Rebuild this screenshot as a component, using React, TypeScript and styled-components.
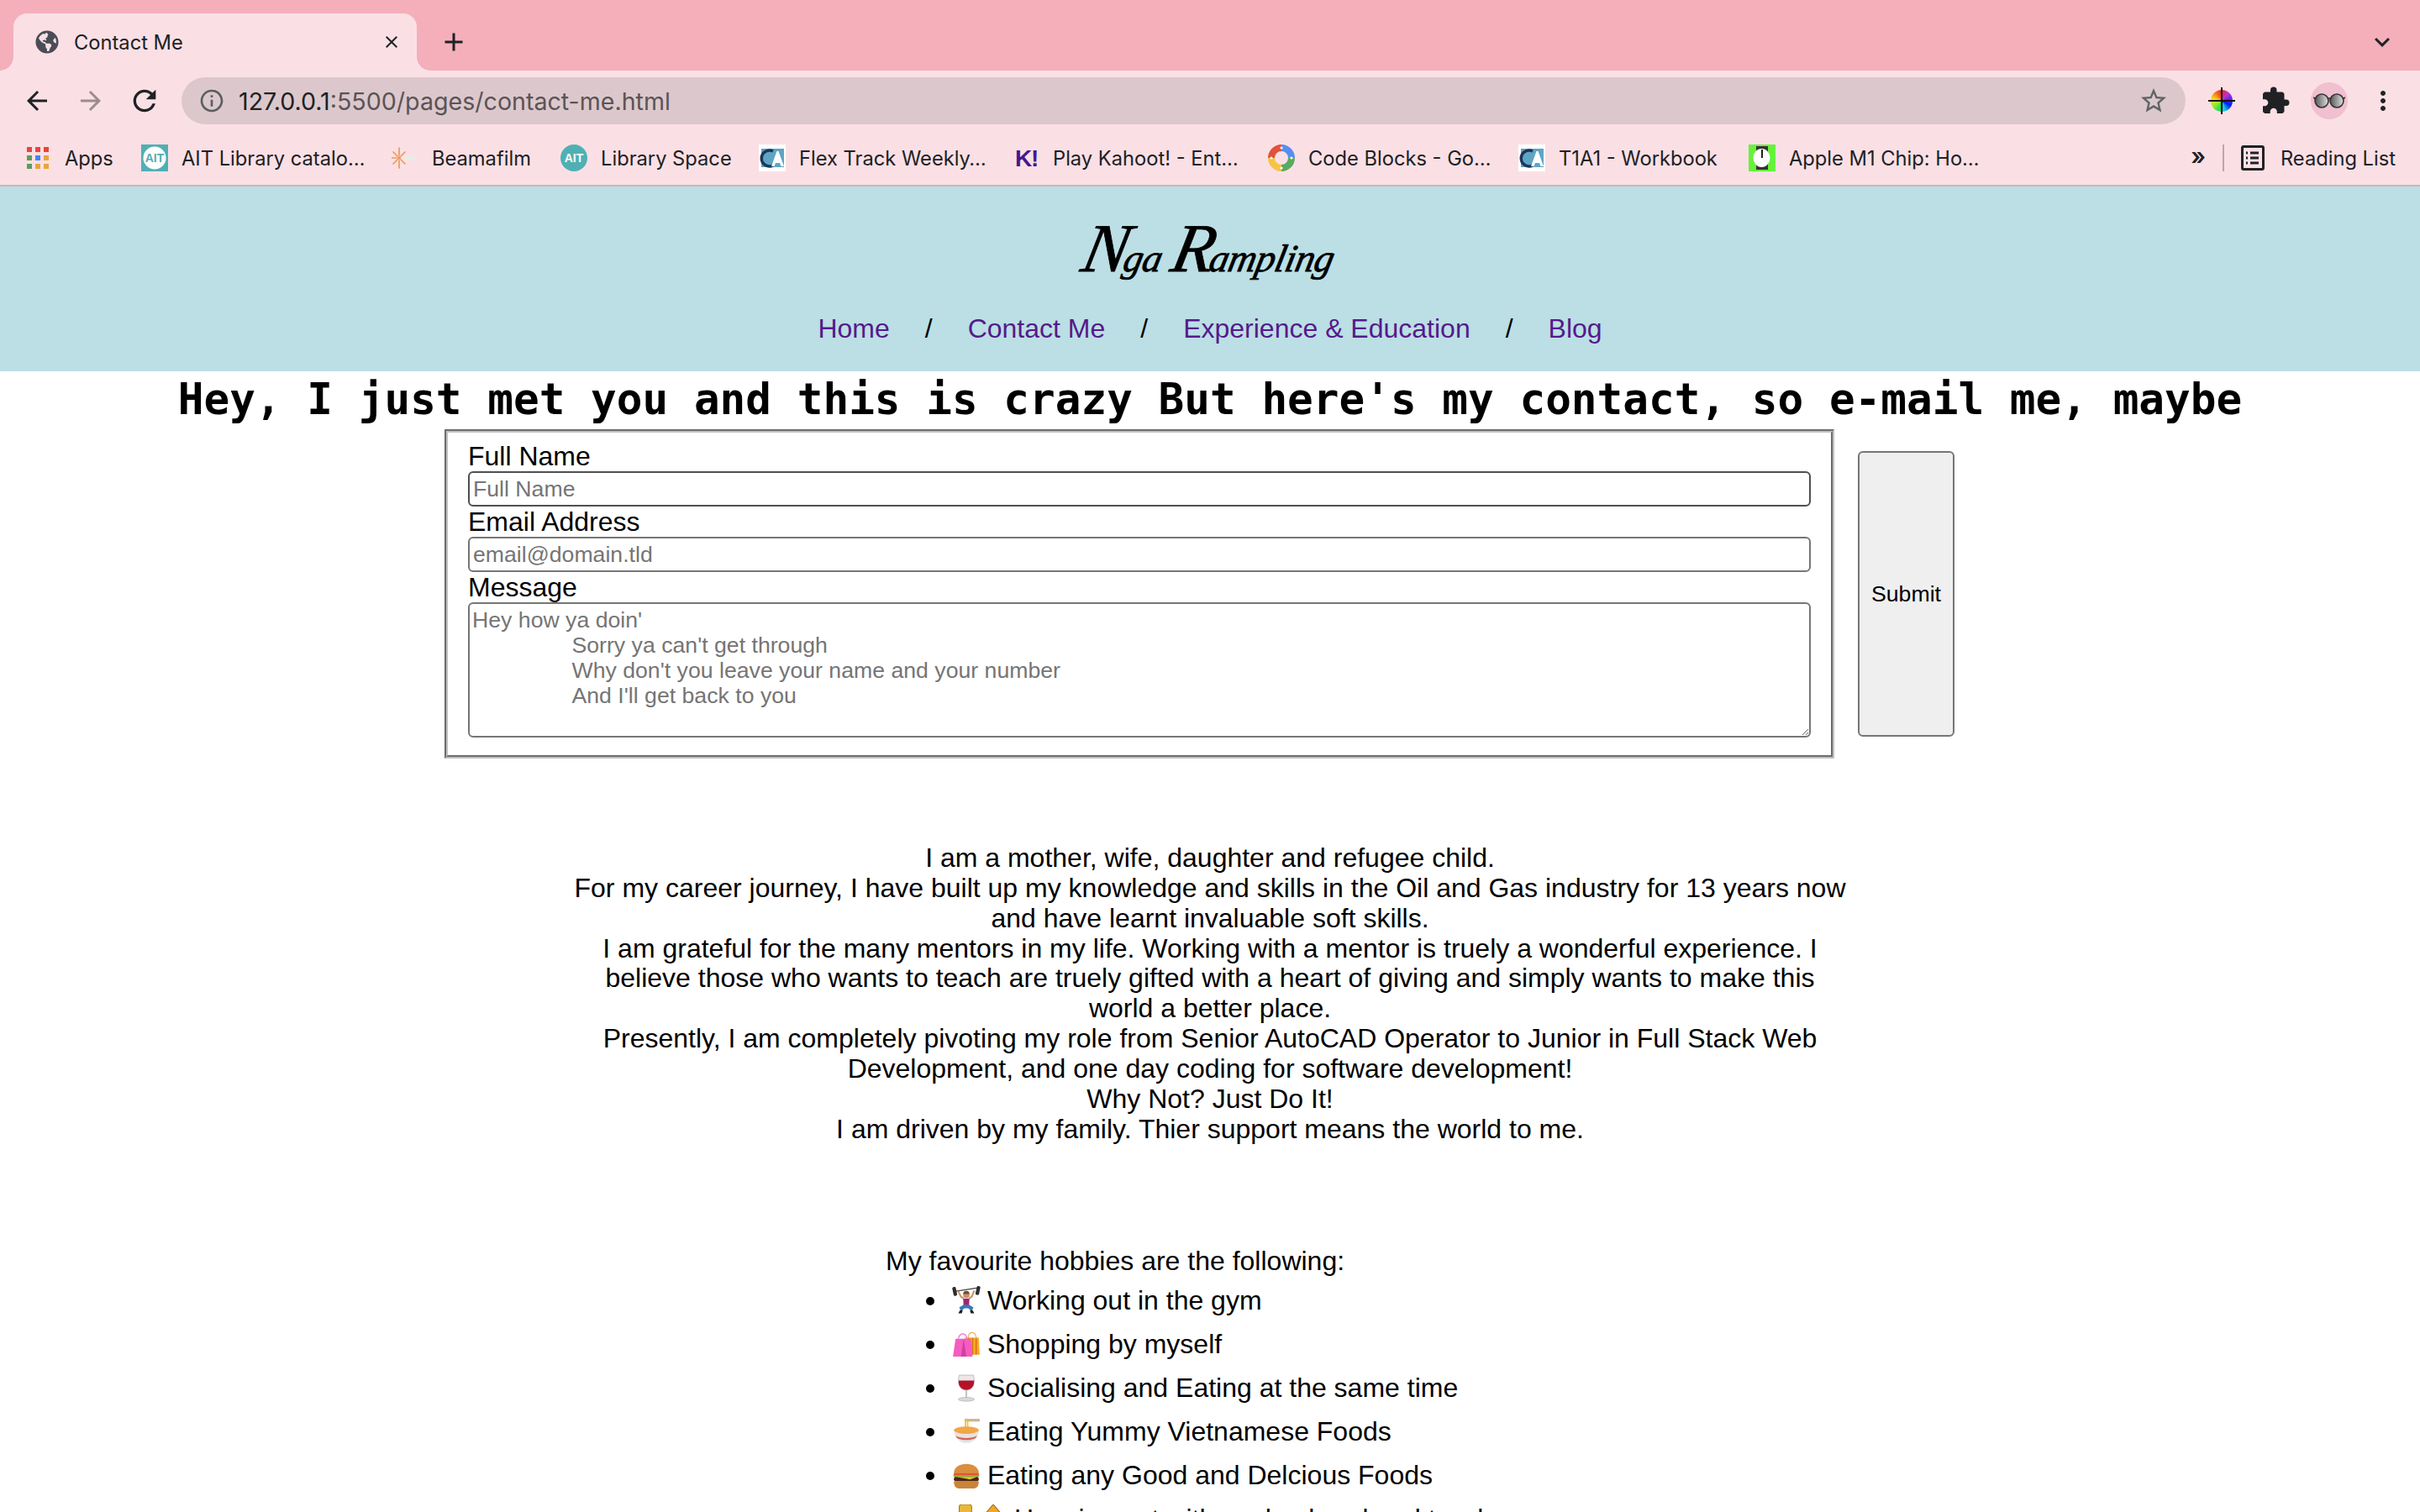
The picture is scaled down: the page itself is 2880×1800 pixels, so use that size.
import { ReactNode } from "react";
import styled, { createGlobalStyle } from "styled-components";
import {
  MdAdd,
  MdArrowBack,
  MdArrowForward,
  MdClose,
  MdExpandMore,
  MdExtension,
  MdInfoOutline,
  MdMoreVert,
  MdRefresh,
  MdStarBorder,
} from "react-icons/md";
import { FaGlobeAmericas } from "react-icons/fa";

const GlobalStyle = createGlobalStyle`
  html, body {
    margin: 0;
    height: 1800px;
    overflow: hidden;
    background: #fff;
    font-family: "Liberation Sans", Arial, sans-serif;
    color: #000;
  }
`;

/* browser chrome */

const TabStrip = styled.div`
  height: 84px;
  box-sizing: border-box;
  padding: 16px 0 0 16px;
  background: #f4afba;
  display: flex;
  align-items: flex-start;
  color: #202124;
`;

const Tab = styled.div`
  position: relative;
  width: 480px;
  height: 68px;
  box-sizing: border-box;
  padding: 0 18px 0 26px;
  display: flex;
  align-items: center;
  gap: 18px;
  background: #fae0e5;
  border-radius: 16px 16px 0 0;
  font: 400 23.7px Inter, "Noto Sans", sans-serif;

  &::before,
  &::after {
    content: "";
    position: absolute;
    bottom: 0;
    width: 16px;
    height: 16px;
  }
  &::before {
    left: -16px;
    background: radial-gradient(circle at 0 0, transparent 15.5px, #fae0e5 16px);
  }
  &::after {
    right: -16px;
    background: radial-gradient(circle at 100% 0, transparent 15.5px, #fae0e5 16px);
  }
`;

const TabTitle = styled.span`
  flex: 1;
  white-space: nowrap;
`;

const NewTab = styled.div`
  margin-left: 16px;
  width: 56px;
  height: 68px;
  display: flex;
  align-items: center;
  justify-content: center;
`;

const TabMenu = styled.div`
  margin-left: auto;
  width: 90px;
  height: 68px;
  display: flex;
  align-items: center;
  justify-content: center;
`;

const Toolbar = styled.div`
  background: #fae0e5;
  border-bottom: 2px solid #c6b7bd;
  color: #202124;
`;

const NavRow = styled.div`
  height: 72px;
  box-sizing: border-box;
  padding: 0 12px;
  display: flex;
  align-items: center;
`;

const ToolButton = styled.div<{ $color?: string }>`
  width: 64px;
  height: 56px;
  flex: none;
  display: flex;
  align-items: center;
  justify-content: center;
  color: ${(p) => p.$color || "#202124"};
`;

const Omnibox = styled.div`
  flex: 1;
  height: 56px;
  margin: 0 11px 0 12px;
  box-sizing: border-box;
  padding: 0 20px 0 20px;
  border-radius: 28px;
  background: #dcc8cc;
  display: flex;
  align-items: center;
  gap: 16px;
  color: #5b5356;
  font: 400 28.6px Inter, "Noto Sans", sans-serif;
`;

const Url = styled.span`
  flex: 1;
  white-space: nowrap;
`;

const Host = styled.span`
  color: #202124;
`;

const ColorWheel = styled.div`
  position: relative;
  width: 26px;
  height: 26px;
  border-radius: 50%;
  background: conic-gradient(#e8242c, #c030d0, #6020f0, #0020f0, #10c8e8, #30e050, #a0e830, #f8e020, #f08020, #e8242c);

  &::before,
  &::after {
    content: "";
    position: absolute;
    background: #111;
  }
  &::before {
    left: -3px;
    right: -3px;
    top: 12px;
    height: 2px;
  }
  &::after {
    top: -3px;
    bottom: -3px;
    left: 12px;
    width: 2px;
  }
`;

const Avatar = styled.div`
  width: 44px;
  height: 44px;
  border-radius: 50%;
  background: #f0bfd0;
  display: flex;
  align-items: center;
  justify-content: center;
`;

const BookmarkRow = styled.div`
  height: 64px;
  box-sizing: border-box;
  padding: 0 29px;
  display: flex;
  align-items: center;
  gap: 33px;
  font: 400 23.7px Inter, "Noto Sans", sans-serif;
`;

const Bookmark = styled.div`
  display: flex;
  align-items: center;
  gap: 16px;
  flex: none;
`;

const BookmarkIcon = styled.div`
  width: 32px;
  height: 32px;
  flex: none;
  display: flex;
  align-items: center;
  justify-content: center;
`;

const BookmarkLabel = styled.span<{ $w: number }>`
  display: block;
  width: ${(p) => p.$w}px;
  white-space: nowrap;
`;

const AppsGrid = styled.div`
  display: grid;
  grid-template-columns: repeat(3, 6px);
  grid-auto-rows: 6px;
  gap: 4px;
`;

const AppsDot = styled.i<{ $c: string }>`
  background: ${(p) => p.$c};
`;

const BookmarkEnd = styled.div`
  margin-left: auto;
  display: flex;
  align-items: center;
`;

const Overflow = styled.span`
  font-size: 28px;
  font-weight: 600;
  line-height: 32px;
  margin-top: -4px;
`;

const Separator = styled.div`
  width: 2px;
  height: 32px;
  margin: 0 20px 0 20px;
  background: #bba6ac;
`;

const ReadingLabel = styled.span`
  margin-left: 19px;
  white-space: nowrap;
`;

/* page */

const Header = styled.header`
  background: #bbdfe5;
  height: 220px;
  box-sizing: border-box;
  padding-top: 36px;
  display: flex;
  flex-direction: column;
  align-items: center;
`;

const Logo = styled.div`
  height: 75px;
  margin-bottom: 40px;
  font: italic 400 46px/75px "Liberation Serif", serif;
  letter-spacing: -0.5px;
  white-space: nowrap;
  -webkit-text-stroke: 0.8px #000;
  color: #000;
  transform: skewX(-12deg);
`;

const LogoCap = styled.span`
  font-size: 82px;
  letter-spacing: -5px;
  margin-right: 1px;
`;

const Nav = styled.nav`
  display: flex;
  gap: 42px;
  font-size: 32px;
  line-height: 36px;
`;

const NavLink = styled.a`
  color: #551a8b;
  text-decoration: none;
`;

const Heading = styled.h1`
  margin: 0 0 1px;
  text-align: center;
  font: 700 51px/68px "DejaVu Sans Mono", "Liberation Mono", monospace;
  white-space: nowrap;
`;

const FormRow = styled.form`
  display: flex;
  align-items: center;
  justify-content: center;
  padding-right: 25px;
  gap: 28px;
`;

const Fieldset = styled.fieldset`
  width: 1654px;
  box-sizing: border-box;
  margin: 0;
  padding: 10px 24px 21px;
  border: 4px groove #c0c0c0;
`;

const Label = styled.label`
  display: block;
  font-size: 32px;
  line-height: 36px;
`;

const Input = styled.input<{ $hovered?: boolean }>`
  display: block;
  width: 100%;
  height: 42px;
  box-sizing: border-box;
  padding: 2px 4px;
  border: 2px solid ${(p) => (p.$hovered ? "#4f4f4f" : "#767676")};
  border-radius: 6px;
  outline: none;
  font: 400 26.67px "Liberation Sans", Arial, sans-serif;

  &::placeholder {
    color: #757575;
    opacity: 1;
  }
`;

const TextArea = styled.textarea`
  display: block;
  width: 100%;
  height: 161px;
  box-sizing: border-box;
  padding: 4px 3px 2px;
  border: 2px solid #767676;
  border-radius: 6px;
  outline: none;
  font: 400 26.67px/30px "Liberation Sans", Arial, sans-serif;

  &::placeholder {
    color: #757575;
    opacity: 1;
  }
`;

const Submit = styled.button`
  width: 115px;
  height: 340px;
  flex: none;
  padding: 0;
  background: #efefef;
  border: 2px solid #767676;
  border-radius: 6px;
  color: #000;
  font: 400 26.67px "Liberation Sans", Arial, sans-serif;
`;

const About = styled.p`
  width: 1520px;
  margin: 101px auto 121px;
  text-align: center;
  font-size: 32px;
  line-height: 35.85px;
`;

const Hobbies = styled.div`
  width: 772px;
  margin: 0 auto;
  font-size: 32px;
  line-height: 36px;
`;

const HobbyList = styled.ul`
  margin: 3px 0 0;
  padding-left: 80px;
  list-style: none;
  line-height: 52px;
`;

const HobbyItem = styled.li`
  position: relative;

  &::before {
    content: "";
    position: absolute;
    left: -32px;
    top: 22px;
    width: 10px;
    height: 10px;
    border-radius: 50%;
    background: #000;
  }
`;

const Emoji = styled.svg`
  width: 34px;
  height: 34px;
  margin: 0 -1px;
  vertical-align: -6px;
`;

function Face({ children }: { children: ReactNode }) {
  return <Emoji viewBox="0 0 32 32">{children}</Emoji>;
}

const lifter = (
  <Face>
    <path d="M3 6 L29 2" stroke="#444" strokeWidth="1.4" />
    <rect x="1" y="1" width="4" height="10" rx="1.5" fill="#2c2c2e" transform="rotate(-12 3 6)" />
    <rect x="27" y="0" width="4" height="10" rx="1.5" fill="#2c2c2e" transform="rotate(12 29 5)" />
    <path d="M7 6 L10 12 L13 14 M25 5 L22 12 L19 14" stroke="#c8936a" strokeWidth="2" fill="none" />
    <circle cx="16" cy="10" r="3.6" fill="#c8936a" />
    <path d="M12.4 9 A3.6 3.6 0 0 1 19.6 9 Z" fill="#7a4a28" />
    <path d="M12.5 14 H19.5 L19 22 H13 Z" fill="#a3246e" />
    <path d="M13 21 H19 L24 24 L22 28 L18 25 H14 L10 28 L8 24 Z" fill="#3a78b8" />
    <path d="M9 27 H12 L11 30.5 H7 Z M20 27 H23 L25 30.5 H21 Z" fill="#222" />
  </Face>
);

const bags = (
  <Face>
    <path d="M14 9 H30 L31 28 H16 Z" fill="#f0b020" />
    <path d="M19 9 V28 M23 9 V28 M27 9 V28" stroke="#e46a28" strokeWidth="1.5" />
    <path d="M18 10 C18 1 27 1 27 10" stroke="#f0a848" strokeWidth="1.2" fill="none" />
    <path d="M4 10 H21 L23 30 H1 Z" fill="#f45cc0" />
    <path d="M13 10 L16 30 H10 Z" fill="#d040a0" />
    <path d="M7 12 C7 2 17 2 17 12" stroke="#f070c8" strokeWidth="1.2" fill="none" />
  </Face>
);

const wine = (
  <Face>
    <path d="M8 2 H24 C26 10 25 18 16 19 C7 18 6 10 8 2 Z" fill="#ece8e8" stroke="#b8b4b4" strokeWidth="0.8" />
    <path d="M7.5 8 H24.5 C25 13 23 18 16 18.5 C9 18 7 13 7.5 8 Z" fill="#b3132a" />
    <rect x="15" y="19" width="2" height="9" fill="#c8c4c4" />
    <ellipse cx="16" cy="29" rx="9" ry="2.2" fill="#dcd8d8" stroke="#aaa" strokeWidth="0.6" />
  </Face>
);

const noodles = (
  <Face>
    <path d="M14 2 H31 V5 H14 Z" fill="#c8b490" />
    <path d="M15 3 V15 M17.5 3 V15" stroke="#f0c030" strokeWidth="1.6" />
    <ellipse cx="16" cy="15" rx="14" ry="4.5" fill="#f2a648" />
    <path d="M2 15 C3 24 9 29 16 29 C23 29 29 24 30 15 C25 20 7 20 2 15 Z" fill="#e6e3e0" />
    <path d="M4 21 C10 24.5 22 24.5 28 21 L26.5 23.5 C21 26.5 11 26.5 5.5 23.5 Z" fill="#d8605c" />
  </Face>
);

const burger = (
  <Face>
    <path d="M2 14 C2 0 30 0 30 14 Z" fill="#d98f3e" />
    <path d="M2 14 H30 V16 H2 Z" fill="#e8503c" />
    <path d="M1 16 H31 L29 19 H3 Z" fill="#7cb83c" />
    <rect x="2" y="18" width="28" height="5" rx="2.5" fill="#4a2414" />
    <path d="M4 18 H28 L20 21 L16 20 Z" fill="#f8c820" />
    <path d="M2 23 H30 C30 29 27 31 24 31 H8 C5 31 2 29 2 23 Z" fill="#c98438" />
  </Face>
);

const mug = (
  <Face>
    <rect x="8" y="0" width="14" height="30" rx="3" fill="#e8b838" stroke="#a87818" strokeWidth="1" />
  </Face>
);

const sparkle = (
  <Face>
    <path d="M16 0 L28 14 L20 30 H8 L4 14 Z" fill="#f0a828" stroke="#a86a10" strokeWidth="1" />
  </Face>
);

const appsColors = [
  "#e8453c",
  "#e8453c",
  "#e8453c",
  "#5a9e5c",
  "#4285f4",
  "#e8a53c",
  "#5a9e5c",
  "#e8a53c",
  "#e8a53c",
];

const aitBadge = (round: boolean) => (
  <svg width="32" height="32" viewBox="0 0 32 32">
    {round ? <circle cx="16" cy="16" r="16" fill="#4fb0b3" /> : <rect width="32" height="32" fill="#4fb0b3" />}
    {!round && <circle cx="16" cy="16" r="13.5" fill="#fff" />}
    <text
      x="16"
      y="21"
      textAnchor="middle"
      fontFamily="Liberation Sans"
      fontWeight="700"
      fontSize="14"
      fill={round ? "#fff" : "#4fb0b3"}
    >
      AIT
    </text>
  </svg>
);

const caBadge = (
  <svg width="32" height="32" viewBox="0 0 32 32">
    <rect width="32" height="32" fill="#fff" />
    <rect x="3" y="5" width="27" height="22" fill="#5da5c4" />
    <path d="M17 8 A9.5 9.5 0 1 0 17 25" stroke="#1d3557" strokeWidth="3.5" fill="none" />
    <path d="M15 26 L21.5 8 H23.5 L30 26 H26.5 L25 22 H20 L18.5 26 Z" fill="#fff" />
  </svg>
);

const beamafilm = (
  <svg width="32" height="32" viewBox="0 0 32 32">
    <rect x="14" y="13" width="16" height="6" rx="3" fill="#e6ece8" opacity="0.7" />
    <g stroke="#eb9a5c" strokeWidth="1.7" strokeLinecap="round">
      <path d="M9 4 V13 M9 19 V28 M2 9 L7 14 M16 9 L11 14 M2 23 L7 18 M16 23 L11 18 M0 16 H6" />
    </g>
    <circle cx="9" cy="16" r="2" fill="#eb9a5c" />
  </svg>
);

const kahootBadge = (
  <svg width="32" height="32" viewBox="0 0 32 32">
    <text x="3" y="26" fontFamily="Liberation Sans" fontWeight="700" fontSize="28" fill="#46178f">
      K
    </text>
    <text x="22" y="26" fontFamily="Liberation Sans" fontWeight="700" fontSize="28" fill="#46178f">
      !
    </text>
  </svg>
);

const codeBlocks = (
  <svg width="32" height="32" viewBox="0 0 32 32" fill="none" strokeWidth="8">
    <path d="M16 4 A12 12 0 0 1 28 16" stroke="#5a8df0" />
    <path d="M28 16 A12 12 0 0 1 16 28" stroke="#5aaa60" />
    <path d="M16 28 A12 12 0 0 1 4 16" stroke="#f6c445" />
    <path d="M4 16 A12 12 0 0 1 16 4" stroke="#e0533d" />
    <g fill="#fff" stroke="none">
      <circle cx="16" cy="4" r="1.6" />
      <circle cx="28" cy="16" r="1.6" />
      <circle cx="16" cy="28" r="1.6" />
      <circle cx="4" cy="16" r="1.6" />
    </g>
  </svg>
);

const appleWatch = (
  <svg width="32" height="32" viewBox="0 0 32 32">
    <rect width="32" height="32" fill="#66f23c" />
    <rect x="9" y="2" width="14" height="28" fill="#333" />
    <ellipse cx="15.5" cy="16" rx="10" ry="11" fill="#fff" />
    <rect x="15" y="6" width="2" height="10" fill="#222" />
  </svg>
);

const readingList = (
  <svg width="28" height="30" viewBox="0 0 28 30" fill="none">
    <rect x="1.5" y="1.5" width="25" height="27" rx="1.5" stroke="#202124" strokeWidth="3" />
    <path d="M11 9 H21 M11 15 H21 M11 21 H21" stroke="#202124" strokeWidth="3" />
    <path d="M6 9 H8 M6 15 H8 M6 21 H8" stroke="#202124" strokeWidth="3" />
  </svg>
);

const glasses = (
  <svg width="38" height="20" viewBox="0 0 38 20">
    <defs>
      <linearGradient id="lens" x1="0" x2="1" y1="0" y2="0">
        <stop offset="0" stopColor="#555" />
        <stop offset="1" stopColor="#dfe2e2" />
      </linearGradient>
    </defs>
    <circle cx="10" cy="10" r="8" fill="url(#lens)" stroke="#333" strokeWidth="1.6" />
    <circle cx="28" cy="10" r="8" fill="url(#lens)" stroke="#333" strokeWidth="1.6" />
    <path d="M17 8 Q19 6 21 8 M0 6 L3 8 M38 6 L35 8" stroke="#333" strokeWidth="1.6" fill="none" />
  </svg>
);

const bookmarks = [
  { icon: aitBadge(false), label: "AIT Library catalo…", w: 217 },
  { icon: beamafilm, label: "Beamafilm", w: 120 },
  { icon: aitBadge(true), label: "Library Space", w: 155 },
  { icon: caBadge, label: "Flex Track Weekly…", w: 221 },
  { icon: kahootBadge, label: "Play Kahoot! - Ent…", w: 223 },
  { icon: codeBlocks, label: "Code Blocks - Go…", w: 217 },
  { icon: caBadge, label: "T1A1 - Workbook", w: 193 },
  { icon: appleWatch, label: "Apple M1 Chip: Ho…", w: 228 },
];

const hobbies = [
  { icon: lifter, text: "Working out in the gym" },
  { icon: bags, text: "Shopping by myself" },
  { icon: wine, text: "Socialising and Eating at the same time" },
  { icon: noodles, text: "Eating Yummy Vietnamese Foods" },
  { icon: burger, text: "Eating any Good and Delcious Foods" },
];

const placeholder =
  "Hey how ya doin'\n                Sorry ya can't get through\n                Why don't you leave your name and your number\n                And I'll get back to you";

function App() {
  return (
    <>
      <GlobalStyle />
      <TabStrip>
        <Tab>
          <FaGlobeAmericas size={28} color="#4a4d55" />
          <TabTitle>Contact Me</TabTitle>
          <MdClose size={24} />
        </Tab>
        <NewTab>
          <MdAdd size={36} />
        </NewTab>
        <TabMenu>
          <MdExpandMore size={36} />
        </TabMenu>
      </TabStrip>
      <Toolbar>
        <NavRow>
          <ToolButton>
            <MdArrowBack size={36} />
          </ToolButton>
          <ToolButton $color="#9c8c90">
            <MdArrowForward size={36} />
          </ToolButton>
          <ToolButton>
            <MdRefresh size={40} />
          </ToolButton>
          <Omnibox>
            <MdInfoOutline size={32} color="#5b5e63" />
            <Url>
              <Host>127.0.0.1</Host>:5500/pages/contact-me.html
            </Url>
            <MdStarBorder size={36} color="#5f6368" />
          </Omnibox>
          <ToolButton>
            <ColorWheel />
          </ToolButton>
          <ToolButton>
            <MdExtension size={36} />
          </ToolButton>
          <ToolButton>
            <Avatar>{glasses}</Avatar>
          </ToolButton>
          <ToolButton>
            <MdMoreVert size={36} />
          </ToolButton>
        </NavRow>
        <BookmarkRow>
          <Bookmark>
            <BookmarkIcon>
              <AppsGrid>
                {appsColors.map((c, i) => (
                  <AppsDot key={i} $c={c} />
                ))}
              </AppsGrid>
            </BookmarkIcon>
            <BookmarkLabel $w={58}>Apps</BookmarkLabel>
          </Bookmark>
          {bookmarks.map((b) => (
            <Bookmark key={b.label}>
              <BookmarkIcon>{b.icon}</BookmarkIcon>
              <BookmarkLabel $w={b.w}>{b.label}</BookmarkLabel>
            </Bookmark>
          ))}
          <BookmarkEnd>
            <Overflow>»</Overflow>
            <Separator />
            {readingList}
            <ReadingLabel>Reading List</ReadingLabel>
          </BookmarkEnd>
        </BookmarkRow>
      </Toolbar>

      <Header>
        <Logo>
          <LogoCap>N</LogoCap>ga <LogoCap>R</LogoCap>ampling
        </Logo>
        <Nav>
          <NavLink href="#">Home</NavLink>
          <span>/</span>
          <NavLink href="#">Contact Me</NavLink>
          <span>/</span>
          <NavLink href="#">Experience &amp; Education</NavLink>
          <span>/</span>
          <NavLink href="#">Blog</NavLink>
        </Nav>
      </Header>

      <Heading>Hey, I just met you and this is crazy But here's my contact, so e-mail me, maybe</Heading>

      <FormRow>
        <Fieldset>
          <Label htmlFor="name">Full Name</Label>
          <Input id="name" type="text" placeholder="Full Name" $hovered />
          <Label htmlFor="email">Email Address</Label>
          <Input id="email" type="email" placeholder="email@domain.tld" />
          <Label htmlFor="message">Message</Label>
          <TextArea id="message" placeholder={placeholder} />
        </Fieldset>
        <Submit type="button">Submit</Submit>
      </FormRow>

      <About>
        I am a mother, wife, daughter and refugee child.
        <br />
        For my career journey, I have built up my knowledge and skills in the Oil and Gas industry for 13 years now and
        have learnt invaluable soft skills.
        <br />
        I am grateful for the many mentors in my life. Working with a mentor is truely a wonderful experience. I believe
        those who wants to teach are truely gifted with a heart of giving and simply wants to make this world a better
        place.
        <br />
        Presently, I am completely pivoting my role from Senior AutoCAD Operator to Junior in Full Stack Web Development,
        and one day coding for software development!
        <br />
        Why Not? Just Do It!
        <br />I am driven by my family. Thier support means the world to me.
      </About>

      <Hobbies>
        My favourite hobbies are the following:
        <HobbyList>
          {hobbies.map((h) => (
            <HobbyItem key={h.text}>
              {h.icon} {h.text}
            </HobbyItem>
          ))}
          <HobbyItem>
            {mug}
            {sparkle} Hanging out with my husband and two boys
          </HobbyItem>
        </HobbyList>
      </Hobbies>
    </>
  );
}

export default App;
